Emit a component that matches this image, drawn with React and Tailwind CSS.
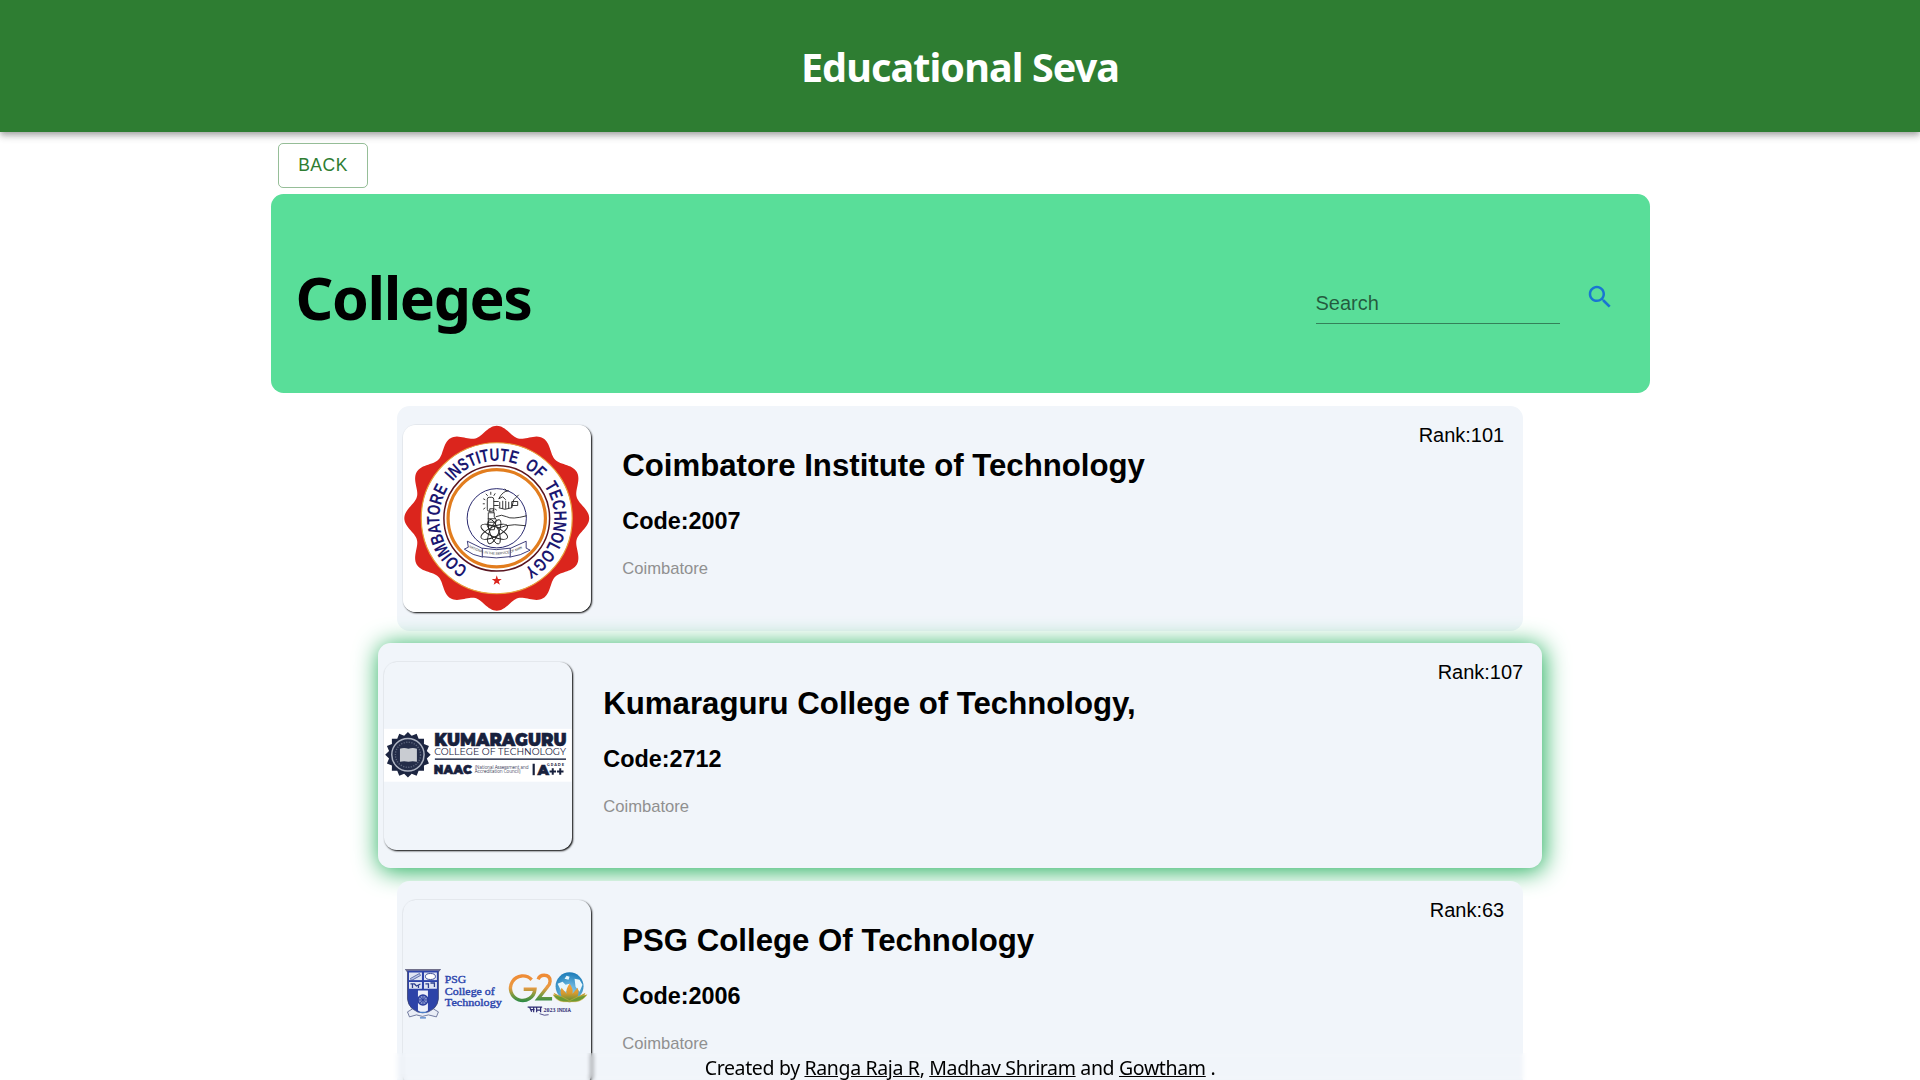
import React from "react";

const CARD_FONT = "font-['Liberation_Sans',Arial,sans-serif]";

function scallop(cx, cy, r, amp, n) {
  const pts = [];
  for (let i = 0; i < 360; i++) {
    const t = (i * Math.PI) / 180;
    const rr = r + amp * Math.cos(n * (t + Math.PI / 2));
    pts.push((cx + rr * Math.cos(t)).toFixed(2) + "," + (cy + rr * Math.sin(t)).toFixed(2));
  }
  return pts.join(" ");
}

function star(cx, cy, R, r, n) {
  const pts = [];
  for (let i = 0; i < n * 2; i++) {
    const t = (i * Math.PI) / n - Math.PI / 2;
    const rr = i % 2 ? r : R;
    pts.push((cx + rr * Math.cos(t)).toFixed(2) + "," + (cy + rr * Math.sin(t)).toFixed(2));
  }
  return pts.join(" ");
}

function CitLogo() {
  return (
    <svg viewBox="0 0 188 188" className="block size-full">
      <rect width="188" height="188" fill="#fff" />
      <polygon points={scallop(94, 93.5, 87.8, 4.9, 12)} fill="#db251d" />
      <circle cx="94" cy="93.500" r="75.700" fill="#fff" stroke="#e8a13c" strokeWidth="1.200" />
      <circle cx="94" cy="93.500" r="53" fill="none" stroke="#5a1520" strokeWidth="1.500" />
      <circle cx="94" cy="93.500" r="48.800" fill="none" stroke="#e27d1e" strokeWidth="3.200" />
      <defs>
        <path id="citRing" d="M94 151A57.500 57.500 0 1 1 94.100 151" />
      </defs>
      <text fill="#1a1670" fontFamily="Liberation Sans Narrow, Liberation Sans, sans-serif" fontWeight="bold" fontSize="18">
        <textPath href="#citRing" startOffset="30" textLength="302" lengthAdjust="spacingAndGlyphs" wordSpacing="6">
          COIMBATORE INSTITUTE OF TECHNOLOGY
        </textPath>
      </text>
      <polygon points={star(94, 156, 5.3, 2.1, 5)} fill="#db251d" />
      <circle cx="94" cy="93.500" r="29.700" fill="#fff" stroke="#28286e" strokeWidth="1" />
      <g fill="none" stroke="#222" strokeWidth="0.900">
        <rect x="84.500" y="72.500" width="6.500" height="14" rx="2" />
        <path d="M91 76.700h5M109 76.700h6v4h-6M91 80.700h5" />
        <path d="M96 74q4-8 10-8M96 74l4-2 3 3M109 83l2-8 5-5M97 77v6M100 76v8M103 76v8M106 77v7M109 77v6M96 83q6 3 13 0M104 66l-2-2" />
        <path d="M85 71l-2-2M88 70v-3M91 71l1.500-2.500M82.500 75l-2-1M82 79h-2M82.500 83l-2 1.500M92 84l2 1.500" />
        <path d="M93 92q6-3 11 0t20-1M94 103q5 0 9-2 8-2 20 0M85.500 88h6v4l2 3-2 10h-5l-2-4 1-5zM85 94h8M85 97.500h8M85 101h8M87 87v-3h4v4" />
        <ellipse cx="91.500" cy="107" rx="14.500" ry="5" transform="rotate(25 91.500 107)" />
        <ellipse cx="91.500" cy="107" rx="14.500" ry="5" transform="rotate(-25 91.500 107)" />
        <ellipse cx="91.500" cy="107" rx="4.500" ry="13" transform="rotate(-20 91.500 107)" />
        <ellipse cx="91.500" cy="107" rx="4.500" ry="13" transform="rotate(24 91.500 107)" />
      </g>
      <g fill="#fff" stroke="#28286e" strokeWidth="0.900">
        <path d="M64.500 116.500L80 124v8.500Q70 131 61.500 124.500l4-2z" />
        <path d="M123.500 116.500L107 124v8.500q11-1.500 20.500-7l-4-2z" />
        <path d="M79.500 123.500q14 3 28 0v8.500q-14 2.500-28 0z" />
      </g>
      <path id="citRibbon" d="M66 122.500q27 15 56 0" fill="none" />
      <text fontSize="3.500" fill="#444" fontFamily="Liberation Sans">
        <textPath href="#citRibbon" textLength="56">NATIONAL IN THE SERVICE OF MAN</textPath>
      </text>
    </svg>
  );
}

function KctLogo() {
  return (
    <svg viewBox="0 0 188 188" className="block size-full">
      <rect y="67" width="188" height="53" fill="#fff" />
      <polygon points={star(24, 93, 22.8, 19.3, 16)} fill="#1c2541" />
      <circle cx="24" cy="93" r="16.200" fill="#242d49" stroke="#aeb4c2" strokeWidth="1.500" />
      <circle cx="24" cy="93" r="12.600" fill="none" stroke="#5c657c" strokeWidth="1.400" strokeDasharray="1.2 1.4" />
      <path d="M16 87q4-1.500 8.500 0 4.500-1.500 8.500 0v13q-4-1-8.500 0-4.500-1-8.500 0z" fill="#c9ccd2" />
      <g fill="#18213d" fontFamily="Montserrat, Inter, sans-serif">
        <text x="50.500" y="84.300" fontSize="17" fontWeight="900" stroke="#18213d" strokeWidth="0.500" textLength="132.500" lengthAdjust="spacingAndGlyphs">KUMARAGURU</text>
        <text x="50.500" y="93.700" fontSize="10" textLength="132" lengthAdjust="spacingAndGlyphs">COLLEGE OF TECHNOLOGY</text>
        <rect x="51" y="96.700" width="131.500" height="1.400" />
        <text x="50" y="112.800" fontSize="12.500" fontWeight="900" stroke="#18213d" strokeWidth="0.500" textLength="38" lengthAdjust="spacingAndGlyphs">NAAC</text>
        <text x="91" y="107.300" fontSize="4.600" textLength="54" lengthAdjust="spacingAndGlyphs">(National Assessment and</text>
        <text x="91" y="111.600" fontSize="4.600" textLength="46" lengthAdjust="spacingAndGlyphs">Accreditation Council)</text>
        <rect x="149" y="102" width="2.200" height="11.500" />
        <text x="154" y="113.500" fontSize="15" fontWeight="900" stroke="#18213d" strokeWidth="0.500" textLength="11.500" lengthAdjust="spacingAndGlyphs">A</text>
        <text x="163.500" y="104.500" fontSize="3.500" fontWeight="bold" textLength="17">GRADE</text>
        <path d="M166 109.800h6.500M169.200 106.500v6.600M173.500 109.800h6.500M176.700 106.500v6.600" stroke="#18213d" strokeWidth="2" />
      </g>
    </svg>
  );
}

function PsgLogo() {
  return (
    <svg viewBox="0 0 188 188" className="block size-full">
      <defs>
        <linearGradient id="gTri" gradientUnits="userSpaceOnUse" x1="0" y1="74" x2="0" y2="102">
          <stop offset="0" stopColor="#f08a35" />
          <stop offset="0.500" stopColor="#e99a42" />
          <stop offset="0.750" stopColor="#7d9b3f" />
          <stop offset="1" stopColor="#2e8b45" />
        </linearGradient>
        <linearGradient id="gLotus" x1="0" y1="0" x2="0" y2="1">
          <stop offset="0" stopColor="#f7a23b" />
          <stop offset="0.500" stopColor="#d99a30" />
          <stop offset="1" stopColor="#4b8f34" />
        </linearGradient>
        <radialGradient id="gGlobe" cx="0.500" cy="0.700" r="0.750">
          <stop offset="0" stopColor="#8ed2ef" />
          <stop offset="1" stopColor="#1475b4" />
        </radialGradient>
      </defs>
      <g transform="translate(0 2.2)">
        <path d="M2.500 67.500H37.500L35.500 70V97q-1 11-15.500 16Q5.500 108 4.500 97V70z" fill="#2d43a8" stroke="#38406f" strokeWidth="0.800" />
        <path d="M3 68h34" stroke="#9a8f93" strokeWidth="1" />
        <path d="M6 70.500h13v8H6zM21 70.500h13v8H21zM6 80h13v7H6zM21 80h13v7H21z" fill="#dfe4f3" />
        <path d="M5.500 79h29.500M20 70v17M5.500 87.500h29.500" stroke="#2d43a8" strokeWidth="1.300" />
        <path d="M7.500 76.500l9-5 1 2-9 5z" fill="#bec9e8" stroke="#2d3f8e" strokeWidth="0.700" />
        <ellipse cx="27.500" cy="74.500" rx="5" ry="3" fill="#fff" stroke="#2d3f8e" strokeWidth="0.900" />
        <path d="M7.500 82h4l2 2 4-2M9.500 82v4M15.500 83v3M22.500 82h3v4M27.500 81h4v4" fill="none" stroke="#2d3f8e" strokeWidth="1.300" />
        <path d="M15 88.500h10v20l-5 3-5-3z" fill="#eef1fa" />
        <circle cx="20" cy="98" r="5" fill="#8291cb" stroke="#2a3e9d" strokeWidth="1.500" />
        <path d="M20 93v10M15 98h10M16.700 94.500l6.500 7M23.200 94.500l-6.500 7" stroke="#2a3e9d" strokeWidth="0.800" />
        <path d="M4.500 110l5-3 5 3q5 2 11 0l5-3 5 3-2 5-8-2q-6 3-12 0l-7 2z" fill="#e9edf6" stroke="#55608c" strokeWidth="0.800" />
        <path d="M16.500 110.500h7M17 116h6" stroke="#4b7fc9" strokeWidth="1.300" />
      </g>
      <g fill="#2b45ad" stroke="#2b45ad" strokeWidth="0.400" fontFamily="Liberation Serif, serif" fontSize="11">
        <text x="42" y="83.500" textLength="21.500" lengthAdjust="spacingAndGlyphs">PSG</text>
        <text x="42" y="95" textLength="50" lengthAdjust="spacingAndGlyphs">College of</text>
        <text x="42" y="106.200" textLength="57" lengthAdjust="spacingAndGlyphs">Technology</text>
      </g>
      <path d="M129 80A12.300 12.300 0 1 0 132.300 89.500H121" fill="none" stroke="url(#gTri)" strokeWidth="3.400" />
      <path d="M135.500 79.500q1.500-4 6-4 6 0 6 6 0 3-3 6L135.500 99H149.500" fill="none" stroke="url(#gTri)" strokeWidth="3.400" />
      <circle cx="167" cy="86.500" r="14" fill="url(#gGlobe)" />
      <path d="M155 84l5-2 3 3 4-1 1 4-5 4-5-2zM172 79l5 1 3 5-3 7-4-5zM164 76l3 1-1 3-4-1z" fill="#e8f7fc" />
      <path d="M167 84q4 5 3 10l5-6q2 4 0 9l8-4q-2 6-8 8-8 3-16 0-6-2-8-8l8 4q-2-5 0-9l5 6q-1-5 3-10z" fill="url(#gLotus)" />
      <path d="M150.500 95q9 1 16.500 6 8-5 17.500-6-4 6-11 7h-13q-7-1-10-7z" fill="#6b9a34" stroke="#e4b440" strokeWidth="0.500" />
      <path d="M125 107.500h14.500M127 107.500l2 4.500M131 107.500v5M128 110h4M134 107.500v5M138 107.500v5M134 110.500h4" fill="none" stroke="#2c2a72" strokeWidth="1.200" />
      <text x="141" y="112.500" fontSize="6.200" fill="#2c2a72" fontWeight="bold" fontFamily="Liberation Serif, serif" textLength="12" lengthAdjust="spacingAndGlyphs">2023</text>
      <text x="154.500" y="111.800" fontSize="5.200" fill="#2c2a72" stroke="#2c2a72" strokeWidth="0.200" fontFamily="Liberation Serif, serif" textLength="14" lengthAdjust="spacingAndGlyphs">INDIA</text>
      <path d="M137 114q5 2.500 9 1" fill="none" stroke="#2c2a72" strokeWidth="0.800" />
    </svg>
  );
}

function CollegeCard({ logo, name, code, city, rank, active }) {
  return (
    <article
      className={
        "flex h-[225px] shrink-0 rounded-[12.5px] bg-[#f1f5fa] pr-[18.75px] pl-[6.25px] " +
        (active ? "w-[1164px] pt-[19px] shadow-[1.25px_2.5px_25px_#1cad57]" : "w-[1126px] pt-[18.75px]")
      }
    >
      <div className="size-[187.5px] shrink-0 overflow-hidden rounded-[12.5px] shadow-[1px_1px_2px_#000]">{logo}</div>
      <div className={active ? "flex-1 pt-[1px] pl-[31.5px]" : "flex-1 pl-[31.5px]"}>
        <h2 className="mt-[23px] text-[31.2px] leading-[36px] font-bold">{name}</h2>
        <h3 className="mt-[24px] text-[23.4px] leading-[27px] font-bold">{code}</h3>
        <p className="mt-[24px] text-[16.6px] leading-[19px] text-[#909090]">{city}</p>
      </div>
      <p className="-mt-[1px] text-[20px] leading-[23px]">{rank}</p>
    </article>
  );
}

export default function App() {
  return (
    <div className={"flex h-[1080px] flex-col overflow-hidden bg-white text-black " + CARD_FONT}>
      <header className="relative z-10 flex h-[132px] shrink-0 items-center justify-center bg-[#2e7d32] pt-[3px] shadow-[0_2.5px_5px_-1px_rgba(0,0,0,0.2),0_5px_6px_0_rgba(0,0,0,0.14),0_1px_12px_0_rgba(0,0,0,0.12)]">
        <h1 className="font-['Noto_Sans','Open_Sans',sans-serif] text-[39.5px] leading-[53px] font-bold tracking-[-0.9px] text-white">Educational Seva</h1>
      </header>
      <main className="mx-auto flex w-[1379px] shrink-0 flex-col">
        <button className="mt-[11px] ml-[7px] h-[45px] w-[90px] rounded-[5px] border border-[#2e7d32]/50 pl-[1px] text-[17.5px] tracking-[0.5px] text-[#2e7d32]">
          BACK
        </button>
        <section className="mt-[6px] flex h-[199px] items-center justify-between rounded-[12.5px] bg-[#59de99] pr-[35px] pl-[25px]">
          <h2 className="pt-[6px] font-['Noto_Sans','Open_Sans',sans-serif] text-[59px] leading-[80px] font-bold tracking-[-1.4px]">Colleges</h2>
          <div className="flex items-center pt-[9px]">
            <div className="mt-[11px] h-[41px] w-[244px] border-b border-black/42 pt-[8.5px] text-[20px] leading-[23px] text-black/60">
              Search
            </div>
            <svg viewBox="0 0 24 24" className="mb-[3px] ml-[25px] size-[30px]" fill="#1976d2">
              <path d="M15.500 14h-.79l-.28-.27C15.410 12.590 16 11.110 16 9.500 16 5.910 13.090 3 9.500 3S3 5.910 3 9.500 5.910 16 9.500 16c1.610 0 3.090-.59 4.230-1.570l.27.28v.79l5 4.990L20.490 19l-4.990-5zm-6 0C7.010 14 5 11.990 5 9.500S7.010 5 9.500 5 14 7.010 14 9.500 11.990 14 9.500 14z" />
            </svg>
          </div>
        </section>
        <div className="mt-[13px] flex flex-col items-center gap-[12.4px]">
          <CollegeCard logo={<CitLogo />} name="Coimbatore Institute of Technology" code="Code:2007" city="Coimbatore" rank="Rank:101" />
          <CollegeCard active logo={<KctLogo />} name="Kumaraguru College of Technology," code="Code:2712" city="Coimbatore" rank="Rank:107" />
          <CollegeCard logo={<PsgLogo />} name="PSG College Of Technology" code="Code:2006" city="Coimbatore" rank="Rank:63" />
        </div>
      </main>
      <footer className="fixed inset-x-0 bottom-0 z-20 flex h-[27px] items-center justify-center pt-[2px] font-['Noto_Sans','Open_Sans',sans-serif] text-[19.5px] leading-[27px] tracking-[-0.35px] backdrop-blur-[2px]">
        <p className="whitespace-pre">
          Created by <a className="underline">Ranga Raja R</a>, <a className="underline">Madhav Shriram</a> and <a className="underline">Gowtham</a> .
        </p>
      </footer>
    </div>
  );
}
